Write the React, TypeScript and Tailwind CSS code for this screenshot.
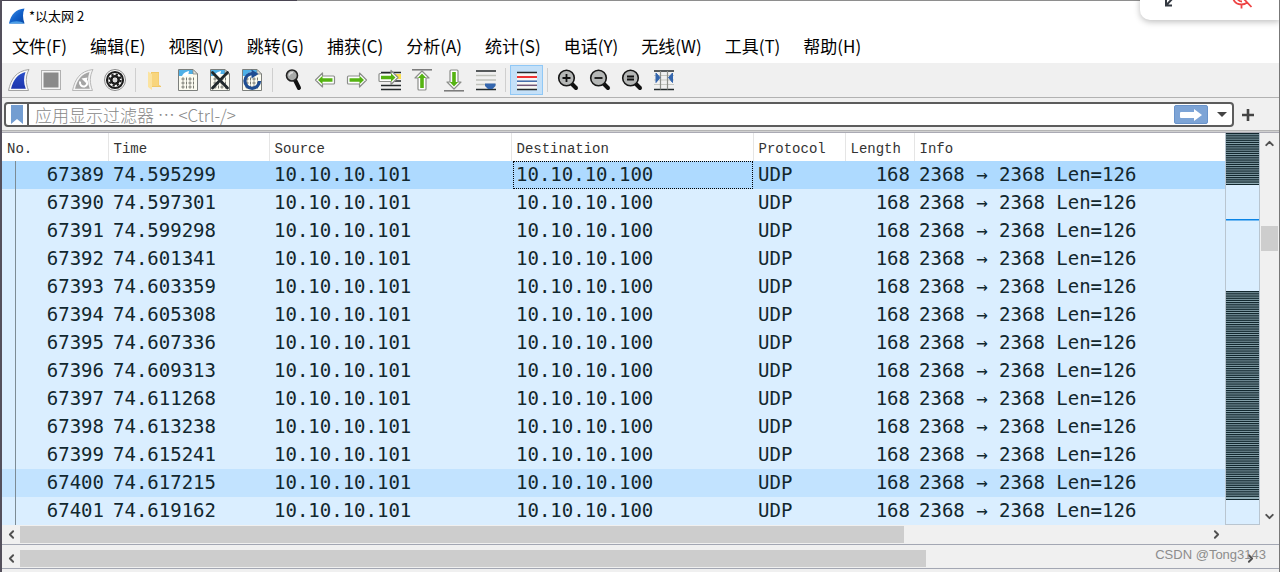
import React from "react";
import { ChevronDown, ChevronLeft, ChevronRight, ChevronUp } from "lucide-react";

const MENUS = ["文件(F)", "编辑(E)", "视图(V)", "跳转(G)", "捕获(C)", "分析(A)", "统计(S)", "电话(Y)", "无线(W)", "工具(T)", "帮助(H)"];

const TIMES = [
  "74.595299", "74.597301", "74.599298", "74.601341", "74.603359", "74.605308", "74.607336",
  "74.609313", "74.611268", "74.613238", "74.615241", "74.617215", "74.619162",
];
const PACKETS = TIMES.map((time, i) => ({ no: 67389 + i, time }));

const COLUMNS = ["No.", "Time", "Source", "Destination", "Protocol", "Length", "Info"];

function Icon({ children }: { children: React.ReactNode }) {
  return (
    <svg viewBox="0 0 24 24" className="size-6" fill="none" aria-hidden="true">
      {children}
    </svg>
  );
}

const FIN_OUTER = "M1.5 22.5C4 11 9 3 22 1.5C18.5 8 18.5 15 21.5 22.5Z";
const FIN_INNER = "M4 20.7C6.500 11.500 10.500 6 18.500 4C16.500 9.500 16.500 15 18.800 20.700Z";

function Fin() {
  return (
    <Icon>
      <defs>
        <linearGradient id="fin" x1="0" y1="0" x2="0" y2="1">
          <stop offset="0" stopColor="#2a4fc8" />
          <stop offset="1" stopColor="#1d35ae" />
        </linearGradient>
      </defs>
      <path d={FIN_OUTER} fill="#fafafa" stroke="#a3a3a3" />
      <path d={FIN_INNER} fill="url(#fin)" />
    </Icon>
  );
}

function Stop() {
  return (
    <Icon>
      <rect x="2.500" y="2.500" width="19" height="19" fill="#f4f4f4" stroke="#b0b0b0" />
      <rect x="4.500" y="4.500" width="15" height="15" fill="#8a8a8a" />
    </Icon>
  );
}

function Restart() {
  return (
    <Icon>
      <path d={FIN_OUTER} fill="#f4f4f4" stroke="#b8b8b8" />
      <path d={FIN_INNER} fill="#a5a5a5" />
      <path d="M9 13.500C8.500 17 11 19 13.500 18.500C16.500 17.800 17 14 15 12" stroke="#fff" strokeWidth="2" />
      <path d="M10.500 10.500L16.500 9.500L15 15Z" fill="#fff" />
    </Icon>
  );
}

function Options() {
  return (
    <Icon>
      <circle cx="12" cy="12" r="10.500" fill="#fafafa" stroke="#8a8a8a" />
      <circle cx="12" cy="12" r="8" stroke="#1c1c1c" strokeWidth="2.200" />
      <circle cx="12" cy="12" r="5.600" stroke="#1c1c1c" strokeWidth="2" strokeDasharray="2.200 2.198" />
      <circle cx="12" cy="12" r="3.700" stroke="#1c1c1c" strokeWidth="2.600" />
      <circle cx="12" cy="12" r="2.200" fill="#d8d8d8" />
    </Icon>
  );
}

function Folder() {
  return (
    <Icon>
      <path d="M7 4H15V17L17 18V19H7Z" fill="#f1c867" />
      <path d="M4 3.500L8 6V22L4 19Z" fill="#fbe3a0" />
      <path d="M8 5H14.500V18H8Z" fill="#f8d57d" />
    </Icon>
  );
}

function Sheet({ children }: { children?: React.ReactNode }) {
  return (
    <Icon>
      <path d="M2.500 1.500H17L21.500 6V22.500H2.500Z" fill="#fbfbf0" stroke="#7c7f7c" />
      <path d="M3 2H16.500L20 6H11L10 8H3Z" fill="#4fb0e6" />
      <path d="M6 8C8 4 10 4 13 3L12 8Z" fill="#fff" />
      <path d="M17 1.500V6H21.500Z" fill="#e2e2d8" stroke="#7c7f7c" strokeWidth=".7" />
      {[11, 15, 19].map((y) => (
        <g key={y} stroke="#777970" strokeWidth="1">
          <ellipse cx="7" cy={y} rx="1" ry="1.200" />
          <path d={`M10.500 ${y - 1.5}v3M17.500 ${y - 1.5}v3`} />
          <ellipse cx="14" cy={y} rx="1" ry="1.200" />
        </g>
      ))}
      {children}
    </Icon>
  );
}

function Magnifier() {
  return (
    <Icon>
      <path d="M14 12L18 20" stroke="#111" strokeWidth="4" strokeLinecap="round" />
      <circle cx="11" cy="7.500" r="5.500" fill="#a8aaa9" stroke="#222" strokeWidth="1.600" />
      <path d="M8 7.500C8.500 5.500 10 4.500 12 4.500" stroke="#ddd" strokeWidth="1.300" />
    </Icon>
  );
}

function ArrowShape({ transform }: { transform?: string }) {
  return (
    <g transform={transform}>
      <path d="M2.500 12L9.500 5V8H20.500Q21.500 8 21.500 9V15Q21.500 16 20.500 16H9.500V19Z" fill="#fff" stroke="#8b8d8a" strokeWidth="1.200" strokeLinejoin="round" />
      <path d="M5 12L9.500 7.800V10.200H19.500V13.800H9.500V16.200Z" fill="#55b312" />
    </g>
  );
}

function Lens({ mark }: { mark: string }) {
  return (
    <Icon>
      <path d="M15.500 15.500L20 20" stroke="#111" strokeWidth="4" strokeLinecap="round" />
      <circle cx="10.500" cy="10" r="7.800" fill="#b5b7b6" stroke="#161616" strokeWidth="1.600" />
      <path d={mark} stroke="#111" strokeWidth="1.800" />
    </Icon>
  );
}

function Tool({ label, children }: { label: string; children: React.ReactNode }) {
  return (
    <button type="button" aria-label={label} className="flex h-8 w-8 shrink-0 items-center justify-center">
      {children}
    </button>
  );
}

function Separator() {
  return (
    <div className="flex w-[9px] shrink-0 justify-center">
      <div className="h-6 w-px bg-[#cfcfcf]" />
    </div>
  );
}

function Toolbar() {
  return (
    <div className="flex h-[34px] items-center bg-[#f0f0f0] pl-px">
      <Tool label="开始捕获"><Fin /></Tool>
      <Tool label="停止捕获"><Stop /></Tool>
      <Tool label="重新开始捕获"><Restart /></Tool>
      <Tool label="捕获选项"><Options /></Tool>
      <Separator />
      <Tool label="打开"><Folder /></Tool>
      <Tool label="保存"><Sheet /></Tool>
      <Tool label="关闭文件">
        <Sheet><path d="M4.500 4.500L19.500 20M19.500 4.500L4.500 20" stroke="#20282b" strokeWidth="2.800" strokeLinecap="round" /></Sheet>
      </Tool>
      <Tool label="重新加载">
        <Sheet>
          <path d="M19.500 13A7.300 7.300 0 1 1 12.500 5.700" stroke="#1f4d92" strokeWidth="3.200" />
          <path d="M11.500 1.500L18.500 6L11.500 10.500Z" fill="#1f4d92" />
        </Sheet>
      </Tool>
      <Separator />
      <Tool label="查找分组"><Magnifier /></Tool>
      <Tool label="上一个"><Icon><ArrowShape /></Icon></Tool>
      <Tool label="下一个"><Icon><ArrowShape transform="rotate(180 12 12)" /></Icon></Tool>
      <Tool label="转到分组">
        <Icon>
          <rect x="14" y="6" width="10" height="5" fill="#fbe04e" />
          <path d="M4 4.500H24M4 13H24M4 17.500H24M4 21.500H24" stroke="#23292b" strokeWidth="1.500" />
          <ArrowShape transform="translate(23.500 -2.500) scale(-1 1)" />
        </Icon>
      </Tool>
      <Tool label="首个分组">
        <Icon><path d="M3 1.800H23" stroke="#777" strokeWidth="1.500" /><ArrowShape transform="translate(1 .5) rotate(90 12 12)" /></Icon>
      </Tool>
      <Tool label="末尾分组">
        <Icon><path d="M3 22.800H23" stroke="#777" strokeWidth="1.500" /><ArrowShape transform="translate(1 -.5) rotate(-90 12 12)" /></Icon>
      </Tool>
      <Tool label="自动滚动">
        <Icon>
          <path d="M3 3H23M3 21.500H23" stroke="#23292b" strokeWidth="1.500" />
          <path d="M3 7.500H23M3 12H23M3 16.500H23" stroke="#bfc1bb" strokeWidth="1.300" />
          <path d="M12 15.500H22.500V18L19.500 21H15L12 18Z" fill="#3466ae" />
        </Icon>
      </Tool>
      <Separator />
      <button type="button" aria-label="着色分组" aria-pressed="true" className="flex h-[30px] w-[33px] shrink-0 items-center justify-center border border-[#90c8f6] bg-[#c4e0f8]">
        <Icon>
          <path d="M2 4H22V22H2Z" fill="#f7f7f5" />
          <path d="M2 4.500H22M2 21.500H22" stroke="#23292b" strokeWidth="1.500" />
          <path d="M2 9H22" stroke="#ee3333" strokeWidth="2" />
          <path d="M2 13.200H22" stroke="#3d68a8" strokeWidth="1.500" />
          <path d="M2 17.300H22" stroke="#725779" strokeWidth="1.500" />
        </Icon>
      </button>
      <Separator />
      <Tool label="放大"><Lens mark="M6.500 10H14.500M10.500 6V14" /></Tool>
      <Tool label="缩小"><Lens mark="M6.500 10H14.500" /></Tool>
      <Tool label="正常大小"><Lens mark="M7 8.500H14M7 11.500H14" /></Tool>
      <Tool label="调整列宽">
        <Icon>
          <path d="M2 7.500H22M2 12H22M2 16.500H22" stroke="#c5c7c1" />
          <path d="M2 3H22M2 21.500H22" stroke="#23292b" strokeWidth="1.500" />
          <path d="M8.500 3V21.500M15.500 3V21.500" stroke="#8d8f8a" strokeWidth="1.200" />
          <path d="M4 5L8 9.500L4 14.500ZM20.500 5L16.500 9.500L20.500 14.500Z" fill="#3466ae" stroke="#3466ae" />
        </Icon>
      </Tool>
    </div>
  );
}

function FilterBar() {
  return (
    <div className="flex h-8 items-center gap-2 bg-[#f0f0f0] pt-px pr-[25px] pl-[2px]">
      <div className="flex h-[25px] min-w-0 flex-1 items-center rounded-[4px] border-2 border-[#5c5c5c] bg-white">
        <button type="button" aria-label="书签" className="flex h-full w-[23px] shrink-0 items-center justify-center border-r-2 border-[#5c5c5c]">
          <svg viewBox="0 0 12 19" className="h-[19px] w-3" aria-hidden="true">
            <path d="M0 0H12V19L6 14L0 19Z" fill="#739dd1" />
          </svg>
        </button>
        <input
          aria-label="显示过滤器"
          placeholder="应用显示过滤器 … <Ctrl-/>"
          className="h-full min-w-0 flex-1 bg-transparent px-[6px] font-['Noto_Sans_CJK_SC',sans-serif] text-[17px] font-light outline-none placeholder:text-[#888888]"
        />
        <button type="button" aria-label="应用" className="flex h-[19px] w-[34px] shrink-0 items-center justify-center rounded-[2px] border border-[#6993ca] bg-[#7da4d6]">
          <svg viewBox="0 0 24 12" className="h-3 w-6" aria-hidden="true">
            <path d="M2 3H15V0L23 6L15 12V9H2Q1 9 1 8V4Q1 3 2 3Z" fill="#fff" />
          </svg>
        </button>
        <button type="button" aria-label="历史记录" className="flex h-full w-6 shrink-0 items-center justify-center pl-1">
          <svg viewBox="0 0 10 5" className="h-[5px] w-[10px]" aria-hidden="true"><path d="M0 0H10L5 5Z" fill="#444" /></svg>
        </button>
      </div>
      <button type="button" aria-label="添加" className="flex size-3 shrink-0 items-center justify-center">
        <svg viewBox="0 0 12 12" className="size-3" aria-hidden="true"><path d="M6 0V12M0 6H12" stroke="#444" strokeWidth="2.600" /></svg>
      </button>
    </div>
  );
}

function rowColor(no: number) {
  if (no === 67389) return "bg-[#aedaff]";
  if (no === 67400) return "bg-[#c2e3ff]";
  return "bg-[#daeeff]";
}

function PacketTable() {
  return (
    <table className="min-w-0 flex-1 table-fixed border-collapse">
      <colgroup>
        <col className="w-[106px]" />
        <col className="w-[161px]" />
        <col className="w-[242px]" />
        <col className="w-[242px]" />
        <col className="w-[92px]" />
        <col className="w-[69px]" />
        <col />
      </colgroup>
      <thead>
        <tr className="bg-white">
          {COLUMNS.map((name) => (
            <th key={name} scope="col" className="h-7 border-r border-[#e5e5e5] p-0 pt-1 pl-[5px] text-left font-['Liberation_Mono',monospace] text-[14px] leading-6 font-normal text-[#333333] last:border-r-0">
              {name}
            </th>
          ))}
        </tr>
      </thead>
      <tbody className="align-top font-['DejaVu_Sans_Mono',monospace] text-[19px] leading-[26px] whitespace-pre text-[#12272e]">
        {PACKETS.map(({ no, time }) => (
          <tr key={no} className={rowColor(no)}>
            <td className="h-7 p-0">
              <div className="flex h-7">
                <span className="w-[14px] border-r border-[#7c8b95]" />
                <span className="flex-1 pr-1 text-right">{no}</span>
              </div>
            </td>
            <td className="p-0 pl-[5px]">{time}</td>
            <td className="p-0 pl-[5px]">10.10.10.101</td>
            <td className="p-0">
              <div className={no === 67389 ? "ml-[2px] h-7 border border-dotted border-black pl-[2px] leading-6" : "h-7 pl-[5px]"}>10.10.10.100</div>
            </td>
            <td className="p-0 pl-[5px]">UDP</td>
            <td className="p-0 pr-1 text-right">168</td>
            <td className="p-0 pl-[5px]">2368 → 2368 Len=126</td>
          </tr>
        ))}
      </tbody>
    </table>
  );
}

function Stripes({ from, to }: { from: number; to: number }) {
  const count = Math.floor((to - from) / 2.2);
  return (
    <g>
      <rect x="0" y={from} width="34" height={to - from} fill="#93afb9" />
      {Array.from({ length: count }, (_, i) => (
        <rect key={i} x="0" y={from + i * 2.2} width="34" height="1.3" fill="#12272e" />
      ))}
      <rect x="0" y={to - 1} width="34" height="1" fill="#12272e" />
    </g>
  );
}

function Minimap() {
  return (
    <div className="w-[35px] shrink-0 border-x border-b border-[#b9c5d0] bg-[#daeeff]">
      <svg viewBox="0 0 34 391" preserveAspectRatio="none" className="h-[391px] w-full" aria-hidden="true">
        <Stripes from={0} to={52} />
        <rect x="0" y="86" width="34" height="1.500" fill="#0a84e6" />
        <Stripes from={158} to={367} />
      </svg>
    </div>
  );
}

function VerticalScroll() {
  return (
    <div className="flex w-[19px] shrink-0 flex-col items-center bg-[#f0f0f0] px-px">
      <button type="button" aria-label="向上滚动" className="flex h-5 w-full items-center justify-center text-[#505050]"><ChevronUp size={13} strokeWidth={3.5} /></button>
      <div className="flex w-full flex-1 flex-col pt-[73px]">
        <div className="h-[25px] w-full bg-[#cdcdcd]" />
      </div>
      <button type="button" aria-label="向下滚动" className="flex h-[18px] w-full items-center justify-center text-[#505050]"><ChevronDown size={13} strokeWidth={3.5} /></button>
    </div>
  );
}

function HorizontalScroll({ share }: { share: number }) {
  return (
    <div className="flex h-[17px] items-center">
      <button type="button" aria-label="向左滚动" className="flex h-full w-[18px] shrink-0 items-center justify-center text-[#505050]"><ChevronLeft size={13} strokeWidth={3.5} /></button>
      <div className="h-full flex-1">
        <div className="h-full bg-[#cdcdcd]" style={{ width: `${share}%` }} />
      </div>
      <button type="button" aria-label="向右滚动" className="flex h-full w-[18px] shrink-0 items-center justify-center text-[#505050]"><ChevronRight size={13} strokeWidth={3.5} /></button>
    </div>
  );
}

export default function App() {
  return (
    <div className="relative flex min-h-screen flex-col overflow-hidden border-r border-l-2 border-r-[#777777] border-l-[#54505c] bg-[#f0f0f0] font-['Noto_Sans_CJK_SC',sans-serif] text-black">
      <div className="flex h-px">
        <div className="w-[295px] bg-[#4a4552]" />
        <div className="flex-1 bg-[#8e8e8e]" />
      </div>
      <header className="flex h-[30px] items-center gap-1 bg-white pl-[7px]">
        <svg viewBox="0 0 16 16" className="size-4" aria-hidden="true">
          <defs>
            <linearGradient id="logo" x1="0" y1="0" x2="1" y2="1">
              <stop offset="0" stopColor="#4b9be6" />
              <stop offset=".5" stopColor="#1262cc" />
              <stop offset="1" stopColor="#0746a4" />
            </linearGradient>
          </defs>
          <path d="M0 15.500C2 6 7 1 15.500 .5C13.500 5 13.500 10 15.500 15.500Z" fill="url(#logo)" />
          <path d="M0 15.500C4 12.500 11 12.500 15.500 15.500Z" fill="#4da0e8" />
        </svg>
        <h1 className="text-[13px] leading-5">*以太网 2</h1>
      </header>
      <nav className="flex h-8 items-center gap-[23px] bg-white pb-[2px] pl-[10px]">
        {MENUS.map((menu) => (
          <button key={menu} type="button" className="shrink-0 text-[17px] leading-6">{menu}</button>
        ))}
      </nav>
      <Toolbar />
      <div className="h-px bg-[#b2b2b2]" />
      <FilterBar />
      <div className="h-[3px] border-y border-t-[#b4b4b4] border-b-[#aaaab4] bg-[#d0d0d0]" />
      <main className="flex">
        <PacketTable />
        <Minimap />
        <VerticalScroll />
      </main>
      <div className="border-b border-[#a3a7b3] py-px pr-[54px]">
        <HorizontalScroll share={74.5} />
      </div>
      <div className="border-b border-[#a3a7b3] pt-[5px] pr-5 pb-px">
        <HorizontalScroll share={74.2} />
      </div>
      <div className="absolute -top-1 -right-px flex h-6 w-[140px] rounded-bl-[10px] bg-white shadow-[0_2px_6px_rgba(0,0,0,0.25)]">
        <svg viewBox="0 0 140 24" className="h-6 w-[140px]" fill="none" aria-hidden="true">
          <path d="M26 3V9.500H32M26 9.500L33 2" stroke="#333840" strokeWidth="2" />
          <g stroke="#ee4444" strokeWidth="1.800">
            <path d="M93 2C94 6 97 8.500 101.500 8.500C104 8.500 106 7.500 107.500 6M101.500 8.500V12.500M97 2C98 4.500 99.500 5.500 102 5.500M101 0L111.500 11" />
          </g>
        </svg>
      </div>
      <p className="pointer-events-none absolute right-[13px] bottom-[7px] font-['Liberation_Sans',sans-serif] text-[13px] leading-5 text-[#8c8c8c]">CSDN @Tong3143</p>
    </div>
  );
}
